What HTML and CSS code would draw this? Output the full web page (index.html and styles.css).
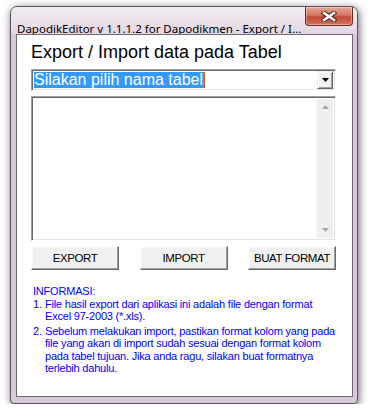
FILE: index.html
```html
<!DOCTYPE html>
<html lang="id">
<head>
    <meta charset="UTF-8">
    <meta name="viewport" content="width=device-width, initial-scale=1.0">
    <title>DapodikEditor - Export / Import</title>
    <link rel="stylesheet" href="styles.css">
</head>
<body>

    <div class="window">
        <div class="titlebar">
            <span class="title">DapodikEditor v 1.1.1.2 for Dapodikmen - Export / I...</span>
            <span class="close">
                <svg width="16" height="11" viewBox="0 0 16 11">
                    <path d="M3 2 L13 9 M13 2 L3 9" stroke="#4a2a28" stroke-width="4.6" stroke-linecap="square"/>
                    <path d="M3 2 L13 9 M13 2 L3 9" stroke="#ffffff" stroke-width="2.6" stroke-linecap="square"/>
                </svg>
            </span>
        </div>

        <div class="client">
            <h1 class="heading">Export / Import data pada Tabel</h1>

            <div class="combo">
                <span class="combo-text"><span class="selected">Silakan pilih nama tabel</span><span class="caret"></span></span>
                <span class="drop">
                    <svg width="7" height="4" viewBox="0 0 7 4"><path d="M0 0 H7 L3.5 4 Z" fill="#000"/></svg>
                </span>
            </div>

            <div class="listbox">
                <div class="list-body"></div>
                <div class="scrollbar">
                    <svg width="7" height="4" viewBox="0 0 7 4"><path d="M0 4 H7 L3.5 0 Z" fill="#a8a8a8"/></svg>
                    <svg width="7" height="4" viewBox="0 0 7 4"><path d="M0 0 H7 L3.5 4 Z" fill="#a8a8a8"/></svg>
                </div>
            </div>

            <div class="actions">
                <button class="btn">EXPORT</button>
                <button class="btn">IMPORT</button>
                <button class="btn">BUAT FORMAT</button>
            </div>

            <div class="info">
                <p>INFORMASI:</p>
                <ol>
                    <li><span class="num">1.</span><span>File hasil export dari aplikasi ini adalah file dengan format<br>Excel 97-2003 (*.xls).</span></li>
                    <li><span class="num">2.</span><span>Sebelum melakukan import, pastikan format kolom yang pada<br>file yang akan di import sudah sesuai dengan format kolom<br>pada tabel tujuan. Jika anda ragu, silakan buat formatnya<br>terlebih dahulu.</span></li>
                </ol>
            </div>
        </div>
    </div>

</body>
</html>
```

FILE: styles.css
```css
body {
    margin: 0;
    background: #ffffff;
    font-family: 'Liberation Sans', Arial, sans-serif;
}
.window {
    margin: 6px 0 0 10px;
    width: 348px;
    height: 398px;
    box-sizing: border-box;
    border: 1px solid #5a5560;
    border-radius: 7px 7px 4px 4px;
    background: #d9c8d9;
    padding: 0 4px 6px 5px;
    box-shadow: 1px 2px 9px rgba(0, 0, 0, 0.6);
    display: flex;
    flex-direction: column;
}
.titlebar {
    height: 27px;
    display: flex;
    align-items: flex-start;
    margin: 0 -4px 0 -5px;
    padding: 0 4px 0 6px;
    border-radius: 6px 6px 0 0;
    background: linear-gradient(#f2edf2, #e3d6e3);
}
.title {
    flex: 1;
    font-family: 'Noto Sans', sans-serif;
    font-size: 11.5px;
    line-height: 14px;
    padding-top: 15px;
    color: #000;
    white-space: nowrap;
}
.close {
    width: 46px;
    height: 18px;
    display: flex;
    align-items: center;
    justify-content: center;
    border: 1px solid #6b2a22;
    border-top: none;
    border-radius: 0 0 4px 4px;
    background: linear-gradient(#e9a899, #d47562 45%, #c14a36 55%, #d5735a);
    box-shadow: inset 0 0 0 1px rgba(255, 255, 255, 0.35);
}
.client {
    height: 363px;
    box-sizing: border-box;
    border: 1px solid #6e6a70;
    background: #ffffff;
    padding: 0 16px 0 14px;
    display: flex;
    flex-direction: column;
}
.heading {
    margin: 7px 0 0;
    font-size: 18px;
    font-weight: normal;
    line-height: 20px;
    color: #000;
}
.combo {
    margin-top: 7px;
    height: 22px;
    box-sizing: border-box;
    border: 1px solid;
    border-color: #a0a0a0 #ffffff #ffffff #a0a0a0;
    box-shadow: inset 1px 1px #696969, inset -1px -1px #e3e3e3;
    display: flex;
    align-items: flex-start;
    padding: 2px 2px 0 2px;
}
.combo-text {
    flex: 1;
    display: flex;
    font-size: 16px;
    line-height: 16px;
}
.selected {
    background: #3399ff;
    color: #ffffff;
    padding-right: 1px;
}
.caret {
    width: 1px;
    height: 16px;
    background: #d06018;
}
.drop {
    width: 16px;
    height: 18px;
    box-sizing: border-box;
    margin-top: -1px;
    background: #f0f0f0;
    border: 1px solid;
    border-color: #f0f0f0 #696969 #696969 #f0f0f0;
    box-shadow: inset 1px 1px #ffffff, inset -1px -1px #a0a0a0;
    display: flex;
    align-items: center;
    justify-content: center;
}
.listbox {
    margin-top: 5px;
    height: 145px;
    box-sizing: border-box;
    border: 1px solid;
    border-color: #a0a0a0 #ffffff #ffffff #a0a0a0;
    box-shadow: inset 1px 1px #696969, inset -1px -1px #e3e3e3;
    display: flex;
    padding: 2px 2px 2px 2px;
}
.list-body {
    flex: 1;
}
.scrollbar {
    width: 16px;
    background: #efefef;
    border-left: 1px solid #f8f8f8;
    display: flex;
    flex-direction: column;
    align-items: center;
    justify-content: space-between;
    padding: 6px 0 6px;
}
.actions {
    margin-top: 5px;
    display: flex;
    justify-content: space-between;
}
.btn {
    width: 88px;
    height: 24px;
    box-sizing: border-box;
    background: #f0f0f0;
    border: 1px solid;
    border-color: #ffffff #696969 #696969 #ffffff;
    box-shadow: inset -1px -1px #a0a0a0, inset 1px 1px #f8f8f8;
    font-family: 'Liberation Sans', sans-serif;
    font-size: 11.5px;
    letter-spacing: -0.4px;
    white-space: nowrap;
    color: #000;
    padding: 0;
}
.info {
    margin-top: 15px;
    padding-left: 2px;
    color: #0000ff;
    font-size: 11px;
    letter-spacing: -0.2px;
    line-height: 12.5px;
    white-space: nowrap;
}
.info p {
    margin: 0;
}
.info ol {
    margin: 0;
    padding: 0;
    list-style: none;
}
.info li {
    display: flex;
}
.info li + li {
    margin-top: 2px;
}
.num {
    width: 12px;
}
```
